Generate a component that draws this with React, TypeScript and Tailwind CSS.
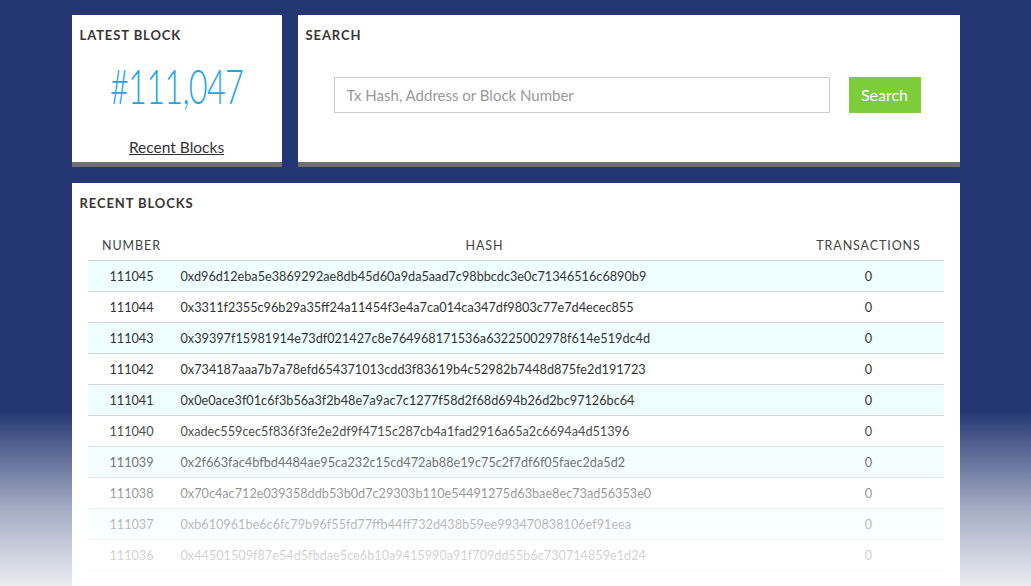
import React from 'react';

const blocks = [
  { number: 111045, hash: '0xd96d12eba5e3869292ae8db45d60a9da5aad7c98bbcdc3e0c71346516c6890b9', txs: 0 },
  { number: 111044, hash: '0x3311f2355c96b29a35ff24a11454f3e4a7ca014ca347df9803c77e7d4ecec855', txs: 0 },
  { number: 111043, hash: '0x39397f15981914e73df021427c8e764968171536a63225002978f614e519dc4d', txs: 0 },
  { number: 111042, hash: '0x734187aaa7b7a78efd654371013cdd3f83619b4c52982b7448d875fe2d191723', txs: 0 },
  { number: 111041, hash: '0x0e0ace3f01c6f3b56a3f2b48e7a9ac7c1277f58d2f68d694b26d2bc97126bc64', txs: 0 },
  { number: 111040, hash: '0xadec559cec5f836f3fe2e2df9f4715c287cb4a1fad2916a65a2c6694a4d51396', txs: 0 },
  { number: 111039, hash: '0x2f663fac4bfbd4484ae95ca232c15cd472ab88e19c75c2f7df6f05faec2da5d2', txs: 0 },
  { number: 111038, hash: '0x70c4ac712e039358ddb53b0d7c29303b110e54491275d63bae8ec73ad56353e0', txs: 0 },
  { number: 111037, hash: '0xb610961be6c6fc79b96f55fd77ffb44ff732d438b59ee993470838106ef91eea', txs: 0 },
  { number: 111036, hash: '0x44501509f87e54d5fbdae5ce6b10a9415990a91f709dd55b6c730714859e1d24', txs: 0 },
];

const font = { fontFamily: 'Lato, "Liberation Sans", sans-serif' };

const CardTitle: React.FC<{ children: React.ReactNode }> = ({ children }) => (
  <h2 className="text-[13px] font-bold uppercase tracking-[0.9px] text-[#3a3633] leading-4">{children}</h2>
);

export default function App() {
  return (
    <div className="relative min-h-[586px] bg-[#243772] overflow-hidden" style={font}>
      <div className="mx-auto w-[888px] pt-[15px]">
        <div className="flex gap-4">
          {/* Latest block */}
          <div className="w-[210px] h-[152px] bg-white border-b-[5px] border-[#6f6f6f] px-2 pt-[12px] flex flex-col items-center">
            <div className="self-start">
              <CardTitle>Latest Block</CardTitle>
            </div>
            <div className="mt-[15px] h-[56px] flex items-center justify-center">
              <span className="inline-block scale-x-[0.69] text-[47px] leading-[56px] font-light text-[#1ea5e6] tracking-[-1px] whitespace-nowrap">
                #111,047
              </span>
            </div>
            <a href="#" className="mt-[23px] text-[15.5px] leading-5 text-[#333] underline">Recent Blocks</a>
          </div>

          {/* Search */}
          <div className="flex-1 h-[152px] bg-white border-b-[5px] border-[#6f6f6f] px-2 pt-[12px]">
            <CardTitle>Search</CardTitle>
            <div className="mt-[34px] flex items-center pl-[28px]">
              <input
                placeholder="Tx Hash, Address or Block Number"
                className="w-[496px] h-[36px] border border-[#cccccc] px-3 text-[15px] text-[#555] placeholder:text-[#999] outline-none"
              />
              <button className="ml-[19px] h-[36px] w-[72px] bg-[#7dcc3a] text-white text-[16px]">Search</button>
            </div>
          </div>
        </div>

        {/* Recent blocks */}
        <div className="mt-4 bg-white px-2 pt-[12px] pb-10">
          <CardTitle>Recent Blocks</CardTitle>
          <table className="mt-[26px] ml-2 w-[856px] border-collapse text-[12.7px] text-[#333]">
            <thead>
              <tr className="border-b border-[#cfd3d6] text-[12.5px] uppercase tracking-[0.9px] text-[#444]">
                <th className="w-[88px] font-normal pb-[4px] h-[22px]">Number</th>
                <th className="w-[618px] font-normal pb-[4px]">Hash</th>
                <th className="w-[150px] font-normal pb-[4px]">Transactions</th>
              </tr>
            </thead>
            <tbody>
              {blocks.map((b, i) => (
                <tr key={b.number} className={`h-[31px] border-b border-[#d3d6d8] ${i % 2 === 0 ? 'bg-[#effefe]' : 'bg-white'}`}>
                  <td className="text-center pt-[2px]">{b.number}</td>
                  <td className="pl-[5px] pt-[2px]">{b.hash}</td>
                  <td className="text-center pt-[2px]">{b.txs}</td>
                </tr>
              ))}
            </tbody>
          </table>
        </div>
      </div>

      {/* bottom fade */}
      <div className="pointer-events-none absolute inset-x-0 bottom-0 h-[200px] bg-gradient-to-b from-white/0 via-white/60 to-white" />
    </div>
  );
}
